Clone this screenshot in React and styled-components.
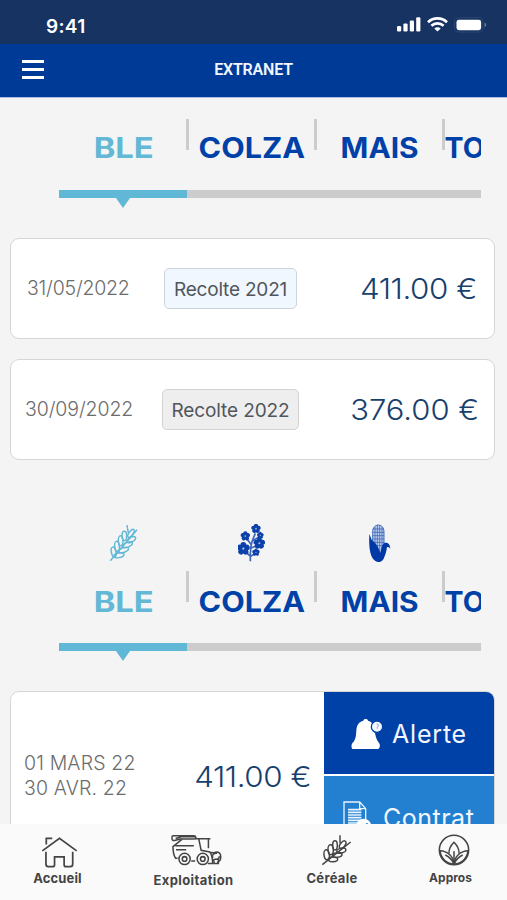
import React, { useState } from "react";
import styled, { createGlobalStyle } from "styled-components";

const GlobalStyle = createGlobalStyle`
  * {
    box-sizing: border-box;
  }
  body {
    margin: 0;
    background-color: #f4f4f4;
    font-family: Inter, "Liberation Sans", sans-serif;
  }
`;

const crops = [
  { name: "BLE", stretch: 1.17 },
  { name: "COLZA", stretch: 1.09 },
  { name: "MAIS", stretch: 1.065 },
  { name: "TO", stretch: 1.02 },
];

const payments = [
  { date: "31/05/2022", label: "Recolte 2021", price: "411.00 €", active: true },
  { date: "30/09/2022", label: "Recolte 2022", price: "376.00 €", active: false },
];

function SignalIcon() {
  return (
    <svg width="24" height="15" viewBox="0 0 24 15" fill="#fff">
      <rect x="0" y="9" width="4.2" height="5.4" rx="1.2" />
      <rect x="6.4" y="6.4" width="4.2" height="8" rx="1.2" />
      <rect x="12.8" y="3.4" width="4.2" height="11" rx="1.2" />
      <rect x="19.2" y="0.2" width="4.2" height="14.2" rx="1.2" />
    </svg>
  );
}

function WifiIcon() {
  return (
    <svg width="21" height="15" viewBox="0 0 21 15" fill="none" stroke="#fff" strokeWidth="2.7">
      <path d="M1 5.2C6.4 0.2 14.6 0.2 20 5.2" />
      <path d="M4.4 8.8C7.9 5.6 13.1 5.6 16.6 8.8" />
      <path d="M10.5 14.6L7.3 11.4C9.2 9.8 11.8 9.8 13.7 11.4Z" fill="#fff" stroke="none" />
    </svg>
  );
}

function BatteryIcon() {
  return (
    <svg width="33" height="16" viewBox="0 0 33 16">
      <rect x="0.5" y="0.7" width="28.6" height="14.4" rx="4.2" fill="none" stroke="#2c4673" />
      <rect x="2.5" y="2.8" width="24.6" height="10.4" rx="2.4" fill="#fff" />
      <path d="M30.6 5.6c2 .8 2 3.8 0 4.6z" fill="#6d7f9a" />
    </svg>
  );
}

function WheatIcon() {
  return (
    <svg width="30" height="38" viewBox="0 0 90 114" fill="none" stroke="#63b8d6" strokeWidth="4.4">
      <path d="M4 110L84 17M54 3L58 27" />
      <ellipse cx="14" cy="84" rx="7" ry="15" transform="rotate(-12 14 84)" />
      <ellipse cx="24" cy="67" rx="7" ry="15" transform="rotate(-6 24 67)" />
      <ellipse cx="35" cy="50" rx="7" ry="15" transform="rotate(-2 35 50)" />
      <ellipse cx="46" cy="36" rx="7" ry="14" />
      <ellipse cx="30" cy="94" rx="7" ry="15" transform="rotate(80 30 94)" />
      <ellipse cx="44" cy="78" rx="7" ry="15" transform="rotate(70 44 78)" />
      <ellipse cx="56" cy="62" rx="7" ry="15" transform="rotate(66 56 62)" />
      <ellipse cx="67" cy="47" rx="7" ry="14" transform="rotate(60 67 47)" />
      <ellipse cx="66" cy="28" rx="6" ry="14" transform="rotate(36 66 28)" />
    </svg>
  );
}

function Flower({ x, y, r }) {
  return (
    <g transform={`translate(${x} ${y})`}>
      {[0, 72, 144, 216, 288].map((angle) => (
        <circle key={angle} cx="0" cy={-r * 0.58} r={r * 0.46} transform={`rotate(${angle})`} />
      ))}
      <circle r={r * 0.35} />
      <circle r={r * 0.18} fill="#a5bbe4" />
    </g>
  );
}

function RapeseedIcon() {
  return (
    <svg width="27" height="38" viewBox="0 0 81 114" fill="#0b41a8">
      <path
        d="M37 112V84M37 96L22 84M37 98L54 86M38 86C36 60 44 48 52 28M40 62L25 42M40 72L62 62M44 50L64 38"
        fill="none"
        stroke="#3d66b8"
        strokeWidth="5"
      />
      <Flower x={54} y={14} r={14} />
      <Flower x={22} y={36} r={14} />
      <Flower x={67} y={34} r={10} />
      <Flower x={64} y={58} r={17} />
      <Flower x={16} y={74} r={19} />
      <Flower x={54} y={85} r={11} />
    </svg>
  );
}

function CornIcon() {
  return (
    <svg width="23" height="39" viewBox="0 0 69 117">
      <path d="M14 72V24C14 -4 48 -4 48 24V72L32 96Z" fill="#bdcdec" stroke="#2858b2" strokeWidth="2.5" />
      <path
        d="M21 8V76M28 3V86M35 3V86M42 8V76M14 15H48M14 25H48M14 35H48M14 45H48M14 55H48M14 65H48"
        stroke="#3160b6"
        strokeWidth="2.2"
      />
      <path
        d="M4 30C3 56 2 98 22 111C30 117 41 115 47 104C54 90 56 76 57 70C61 68 64 70 67 75C66 60 59 55 49 57C42 61 40 72 37 88C33 68 20 54 11 47C8 41 7 36 4 30Z"
        fill="#0039a6"
      />
    </svg>
  );
}

function BellIcon() {
  return (
    <svg width="32" height="32" viewBox="0 0 96 96">
      <path
        d="M37 8C37 1 51 1 51 8C62 11 70 20 71 34C72 52 76 64 82 72C89 78 88 93 80 93H7C0 93 0 80 5 74C12 68 15 58 16 38C17 21 24 11 37 8Z"
        fill="#fff"
      />
      <circle cx="78" cy="26" r="17" fill="#f4f8ff" stroke="#0041a8" strokeWidth="4" />
      <path d="M77 18c6 0 7 5 2 9v5" fill="none" stroke="#aabfe3" strokeWidth="4" />
    </svg>
  );
}

function ContractIcon() {
  return (
    <svg width="29" height="34" viewBox="0 0 87 102" fill="none" stroke="#e8f4ff" strokeWidth="4">
      <path d="M48 98H3V3H50L68 23V60M50 3V23H68" />
      <path d="M15 26H55M15 34H55M15 42H55M15 50H55M15 58H55M15 66H44" strokeWidth="5" />
      <circle cx="62" cy="76" r="23" fill="#fff" stroke="none" />
      <path d="M50 74l9 9 15-16" stroke="#2380d0" strokeWidth="6" />
    </svg>
  );
}

function HomeIcon() {
  return (
    <svg width="37" height="33" viewBox="0 0 112 98" fill="none" stroke="#444" strokeWidth="5.2">
      <path d="M4 44L56 6L108 44M16 25V6H34" />
      <path d="M15 47V84Q15 92 22 92H35Q41 92 41 86V62H70V86Q70 92 76 92H89Q96 92 96 84V47" />
    </svg>
  );
}

function HarvesterIcon() {
  return (
    <svg width="53" height="34" viewBox="0 0 160 102" fill="none" stroke="#444" strokeWidth="4.6">
      <path d="M9 8H72Q78 8 78 15Q78 18 72 18H31L14 22Q6 23 6 16Q5 9 9 8ZM17 16L34 11H76" />
      <path d="M75 17H122M116 18V46M87 18L94 52L121 57M36 19L9 41Q9 64 17 76H23M16 38H72M18 50H49" />
      <path d="M121 58Q128 68 129 92M114 92H132M64 84H76" />
      <circle cx="44" cy="78" r="17" />
      <circle cx="44" cy="78" r="7" />
      <circle cx="99" cy="78" r="17" />
      <circle cx="99" cy="78" r="7" />
      <path d="M120 58C132 62 132 58 142 57C157 59 157 85 142 88M132 78L133 92H146V79M129 75C126 65 132 60 142 61M134 78C145 81 149 76 149 70" />
    </svg>
  );
}

function CerealIcon() {
  return (
    <svg width="32" height="33" viewBox="0 0 96 99" fill="none" stroke="#444" strokeWidth="4.4">
      <path d="M4 92L89 24M57 4V28" />
      <ellipse cx="17" cy="62" rx="8" ry="15" transform="rotate(-8 17 62)" />
      <ellipse cx="29" cy="47" rx="8" ry="15" transform="rotate(-4 29 47)" />
      <ellipse cx="42" cy="34" rx="7" ry="14" />
      <ellipse cx="36" cy="76" rx="7" ry="14" transform="rotate(88 36 76)" />
      <ellipse cx="49" cy="63" rx="7" ry="14" transform="rotate(82 49 63)" />
      <ellipse cx="61" cy="50" rx="7" ry="14" transform="rotate(76 61 50)" />
      <ellipse cx="65" cy="32" rx="7" ry="13" transform="rotate(38 65 32)" />
    </svg>
  );
}

function SproutIcon() {
  return (
    <svg width="32" height="32" viewBox="0 0 96 96" fill="none" stroke="#444" strokeWidth="4.5">
      <circle cx="48" cy="48" r="44" />
      <path d="M48 90C46 66 28 51 6 50C8 72 24 89 48 90C72 89 88 72 90 50C68 51 50 66 48 90Z" />
      <path d="M33 58C32 44 40 33 48 25C56 33 64 44 63 58M48 52V88M22 63Q40 72 47 88M74 63Q56 72 49 88" />
    </svg>
  );
}

function CropTabs({ withIcons }) {
  const [selected, setSelected] = useState(0);
  return (
    <Tabs>
      {withIcons && (
        <IconRow>
          <WheatIcon />
          <RapeseedIcon />
          <CornIcon />
        </IconRow>
      )}
      <TabList $low={withIcons}>
        {crops.map((crop, i) => (
          <Tab
            key={crop.name}
            $active={selected === i}
            $cut={i === 3}
            $low={withIcons}
            onClick={() => setSelected(i)}
          >
            <TabName $stretch={crop.stretch}>{crop.name}</TabName>
          </Tab>
        ))}
      </TabList>
      <Track>
        <Progress style={{ marginLeft: selected * 128 }} />
      </Track>
    </Tabs>
  );
}

function App() {
  return (
    <Screen>
      <GlobalStyle />
      <StatusBar>
        <Time>9:41</Time>
        <StatusIcons>
          <SignalIcon />
          <WifiIcon />
          <BatteryIcon />
        </StatusIcons>
      </StatusBar>
      <Header>
        <MenuButton aria-label="Menu">
          <span />
          <span />
          <span />
        </MenuButton>
        <Title>EXTRANET</Title>
      </Header>

      <Content>
        <CropTabs />
        <CardList>
          {payments.map((item) => (
            <Card key={item.date}>
              <DateText $wide={!item.active}>{item.date}</DateText>
              <Chip $active={item.active}>{item.label}</Chip>
              <Price $wide={!item.active}>{item.price}</Price>
            </Card>
          ))}
        </CardList>

        <CropTabs withIcons />
        <OfferCard>
          <Period>
            <span>01 MARS 22</span>
            <span>30 AVR. 22</span>
          </Period>
          <OfferPrice>411.00 €</OfferPrice>
          <Actions>
            <Action>
              <BellIcon />
              <span>Alerte</span>
            </Action>
            <Action $light>
              <ContractIcon />
              <span>Contrat</span>
            </Action>
          </Actions>
        </OfferCard>
      </Content>

      <NavBar>
        <NavItem $width="115px" $top="12px" $gap="0px" $shift="3px" $spacing="0.1px">
          <HomeIcon />
          <span>Accueil</span>
        </NavItem>
        <NavItem $width="157px" $top="9px" $gap="4px" $shift="5px" $spacing="0.4px">
          <HarvesterIcon />
          <span>Exploitation</span>
        </NavItem>
        <NavItem $width="120px" $top="10px" $gap="2px" $shift="10px" $spacing="0.3px">
          <CerealIcon />
          <span>Céréale</span>
        </NavItem>
        <NavItem $width="117px" $top="10px" $gap="3px" $shift="6px" $small>
          <SproutIcon />
          <span>Appros</span>
        </NavItem>
      </NavBar>
    </Screen>
  );
}

export default App;

const Screen = styled.main`
  width: 507px;
  height: 900px;
  display: flex;
  flex-direction: column;
  overflow: hidden;
  background-color: #f4f4f4;
`;

const StatusBar = styled.div`
  height: 44px;
  flex-shrink: 0;
  display: flex;
  align-items: center;
  justify-content: space-between;
  padding: 8px 20px 0 46px;
  background-color: #163362;
`;

const Time = styled.span`
  color: #fff;
  font-size: 19px;
  font-weight: 600;
  letter-spacing: 0.3px;
`;

const StatusIcons = styled.div`
  display: flex;
  align-items: center;
  gap: 6px;
  padding-bottom: 3px;
`;

const Header = styled.header`
  height: 54px;
  flex-shrink: 0;
  display: grid;
  grid-template-columns: 60px 1fr 60px;
  align-items: center;
  padding-bottom: 2px;
  background-color: #003a97;
  border-bottom: 1px solid #a9bfe2;
`;

const MenuButton = styled.button`
  display: flex;
  flex-direction: column;
  gap: 5px;
  width: 22px;
  margin-left: 22px;
  padding: 0;
  border: none;
  background: none;
  cursor: pointer;
  span {
    height: 3px;
    background-color: #fff;
  }
`;

const Title = styled.h1`
  margin: 0;
  text-align: center;
  font-family: Roboto, sans-serif;
  font-size: 16px;
  font-weight: 600;
  line-height: 20px;
  letter-spacing: -0.2px;
  color: #f2f6ff;
`;

const Content = styled.div`
  flex: 1;
  min-height: 0;
  overflow: hidden;
  padding: 21px 12px 0 10px;
`;

const Tabs = styled.section`
  width: 422px;
  margin-left: 49px;
`;

const IconRow = styled.div`
  display: grid;
  grid-template-columns: repeat(3, 128px);
  justify-items: center;
  height: 47px;
  svg:first-child {
    margin-left: 2px;
  }
`;

const TabList = styled.div`
  display: flex;
  overflow: hidden;
  height: ${(props) => (props.$low ? "72px" : "71px")};
`;

const Tab = styled.button`
  position: relative;
  flex: 0 0 128px;
  height: ${(props) => (props.$low ? "62px" : "58px")};
  padding: 0;
  padding-left: ${(props) => (props.$cut ? "2px" : "1px")};
  border: none;
  background: none;
  text-align: ${(props) => (props.$cut ? "left" : "center")};
  font-family: inherit;
  font-size: 28px;
  font-weight: 700;
  line-height: ${(props) => (props.$low ? "62px" : "58px")};
  color: ${(props) => (props.$active ? "#63b8d6" : "#0041a8")};
  cursor: pointer;
  &:not(:first-child)::before {
    content: "";
    position: absolute;
    top: 0;
    left: -0.6px;
    width: 3px;
    height: 31px;
    background-color: #ccc;
  }
`;

const TabName = styled.span`
  position: relative;
  display: inline-block;
  transform: scaleX(${(props) => props.$stretch});
`;

const Track = styled.div`
  height: 8px;
  background-color: #ccc;
`;

const Progress = styled.div`
  position: relative;
  width: 128px;
  height: 8px;
  background-color: #60b7d6;
  &::after {
    content: "";
    position: absolute;
    top: 8px;
    left: 57px;
    border-left: 7px solid transparent;
    border-right: 7px solid transparent;
    border-top: 10px solid #60b7d6;
  }
`;

const CardList = styled.div`
  display: flex;
  flex-direction: column;
  gap: 20px;
  margin: 40px 0 64px;
`;

const Card = styled.article`
  display: grid;
  grid-template-columns: 150px 139px 1fr;
  align-items: center;
  height: 101px;
  border: 1.5px solid #d6d6d6;
  border-radius: 9px;
  background-color: #fff;
`;

const DateText = styled.span`
  padding-left: ${(props) => (props.$wide ? "14px" : "16px")};
  padding-bottom: 1px;
  font-size: 19.5px;
  font-weight: 350;
  letter-spacing: ${(props) => (props.$wide ? "-0.1px" : "-0.2px")};
  color: #6c6c6c;
`;

const Chip = styled.span`
  justify-self: center;
  width: ${(props) => (props.$active ? "133px" : "137px")};
  height: 41px;
  border: 1px solid ${(props) => (props.$active ? "#ccd5de" : "#d2d2d2")};
  border-radius: 5px;
  background-color: ${(props) => (props.$active ? "#f0f7ff" : "#eee")};
  text-align: center;
  font-size: 19px;
  font-weight: 400;
  line-height: 41px;
  letter-spacing: ${(props) => (props.$active ? "-0.2px" : "-0.1px")};
  white-space: nowrap;
  color: #50565c;
`;

const Price = styled.span`
  padding-right: ${(props) => (props.$wide ? "15px" : "17px")};
  text-align: right;
  font-size: 29px;
  font-weight: 300;
  letter-spacing: ${(props) => (props.$wide ? "0px" : "-0.4px")};
  white-space: nowrap;
  color: #17406d;
  transform: scaleX(${(props) => (props.$wide ? 1.067 : 1.08)});
  transform-origin: calc(100% - 16px) 50%;
`;

const OfferCard = styled.article`
  display: flex;
  height: 171px;
  margin-top: 40px;
  border: 1.5px solid #d6d6d6;
  border-radius: 9px;
  background-color: #fff;
  overflow: hidden;
`;

const Period = styled.div`
  display: flex;
  flex-direction: column;
  justify-content: center;
  width: 150px;
  padding: 0 0 2px 13px;
  font-size: 19.5px;
  font-weight: 350;
  line-height: 24.5px;
  letter-spacing: 0.15px;
  white-space: nowrap;
  color: #6c6c6c;
`;

const OfferPrice = styled(Price)`
  flex: 1;
  align-self: center;
  padding-right: 13px;
`;

const Actions = styled.div`
  display: flex;
  flex-direction: column;
  gap: 2px;
  width: 170px;
`;

const Action = styled.button`
  display: flex;
  align-items: center;
  gap: ${(props) => (props.$light ? "11px" : "9px")};
  height: 82px;
  flex-shrink: 0;
  padding: 2px 0 0 ${(props) => (props.$light ? "19px" : "27px")};
  border: none;
  background-color: ${(props) => (props.$light ? "#2380d0" : "#0041a8")};
  font-family: inherit;
  font-size: 25px;
  font-weight: 400;
  letter-spacing: ${(props) => (props.$light ? "0.5px" : "0.8px")};
  color: #f1f6ff;
  cursor: pointer;
`;

const NavBar = styled.nav`
  display: flex;
  height: 76px;
  flex-shrink: 0;
  background-color: #fafafa;
`;

const NavItem = styled.a`
  display: flex;
  flex-direction: column;
  align-items: center;
  flex: 0 0 ${(props) => props.$width};
  gap: ${(props) => props.$gap};
  padding-top: ${(props) => props.$top};
  font-size: ${(props) => (props.$small ? "12px" : "13px")};
  font-weight: 700;
  line-height: 18px;
  letter-spacing: ${(props) => props.$spacing || "0"};
  color: #444;
  cursor: pointer;
  svg {
    margin-left: ${(props) => props.$shift};
  }
`;
